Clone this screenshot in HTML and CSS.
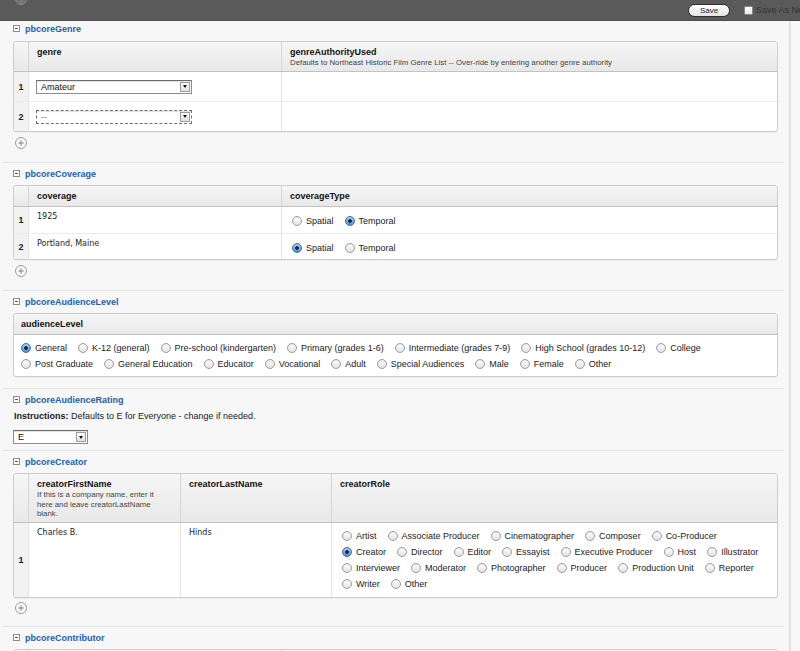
FILE: index.html
```html
<!DOCTYPE html>
<html lang="en">
<head>
<meta charset="utf-8">
<title>PBCore record</title>
<link rel="stylesheet" href="styles.css">
</head>
<body>
<header class="topbar">
  <span class="knob"></span>
  <span class="savebtn">Save</span>
  <span class="chk"></span>
  <span class="saveas">Save As New</span>
</header>
<div class="main">
  <div class="content">

    <section class="sec first">
      <h2 class="sh"><span class="minus"></span>pbcoreGenre</h2>
      <div class="tbl">
        <div class="tr th cols-genre">
          <div class="num"></div>
          <div class="cell"><div class="tt">genre</div></div>
          <div class="cell"><div class="tt">genreAuthorityUsed</div><div class="sub">Defaults to Northeast Historic Film Genre List -- Over-ride by entering another genre authority</div></div>
        </div>
        <div class="tr b cols-genre rows29">
          <div class="num">1</div>
          <div class="cell mid"><div class="select w156"><span class="val">Amateur</span><span class="arrow"></span></div></div>
          <div class="cell"></div>
        </div>
        <div class="tr b cols-genre rows29">
          <div class="num">2</div>
          <div class="cell mid"><div class="select w156 focus"><span class="val dim">--</span><span class="arrow"></span></div></div>
          <div class="cell"></div>
        </div>
      </div>
      <div class="add"><svg width="12" height="12" viewBox="0 0 12 12"><circle cx="6" cy="6" r="5.5" fill="#f9f9f9" stroke="#9b9b9b"/><path d="M6 3.3v5.4M3.3 6h5.4" stroke="#808080" stroke-width="1"/></svg></div>
    </section>

    <section class="sec">
      <h2 class="sh"><span class="minus"></span>pbcoreCoverage</h2>
      <div class="tbl">
        <div class="tr th cols-genre">
          <div class="num"></div>
          <div class="cell"><div class="tt">coverage</div></div>
          <div class="cell"><div class="tt">coverageType</div></div>
        </div>
        <div class="tr b cols-genre rows26">
          <div class="num">1</div>
          <div class="cell data">1925</div>
          <div class="cell rcell"><div class="radios small"><span class="opt"><span class="rd"></span>Spatial</span><span class="opt"><span class="rd on"></span>Temporal</span></div></div>
        </div>
        <div class="tr b cols-genre rows25">
          <div class="num">2</div>
          <div class="cell data">Portland, Maine</div>
          <div class="cell rcell"><div class="radios small"><span class="opt"><span class="rd on"></span>Spatial</span><span class="opt"><span class="rd"></span>Temporal</span></div></div>
        </div>
      </div>
      <div class="add"><svg width="12" height="12" viewBox="0 0 12 12"><circle cx="6" cy="6" r="5.5" fill="#f9f9f9" stroke="#9b9b9b"/><path d="M6 3.3v5.4M3.3 6h5.4" stroke="#808080" stroke-width="1"/></svg></div>
    </section>

    <section class="sec audience">
      <h2 class="sh"><span class="minus"></span>pbcoreAudienceLevel</h2>
      <div class="tbl">
        <div class="tr th single">
          <div class="cell nob"><div class="tt">audienceLevel</div></div>
        </div>
        <div class="tr b single">
          <div class="cell nob abody">
            <div class="radios">
              <span class="opt"><span class="rd on"></span>General</span>
              <span class="opt"><span class="rd"></span>K-12 (general)</span>
              <span class="opt"><span class="rd"></span>Pre-school (kindergarten)</span>
              <span class="opt"><span class="rd"></span>Primary (grades 1-6)</span>
              <span class="opt"><span class="rd"></span>Intermediate (grades 7-9)</span>
              <span class="opt"><span class="rd"></span>High School (grades 10-12)</span>
              <span class="opt"><span class="rd"></span>College</span>
              <span class="opt"><span class="rd"></span>Post Graduate</span>
              <span class="opt"><span class="rd"></span>General Education</span>
              <span class="opt"><span class="rd"></span>Educator</span>
              <span class="opt"><span class="rd"></span>Vocational</span>
              <span class="opt"><span class="rd"></span>Adult</span>
              <span class="opt"><span class="rd"></span>Special Audiences</span>
              <span class="opt"><span class="rd"></span>Male</span>
              <span class="opt"><span class="rd"></span>Female</span>
              <span class="opt"><span class="rd"></span>Other</span>
            </div>
          </div>
        </div>
      </div>
    </section>

    <section class="sec rating">
      <h2 class="sh"><span class="minus"></span>pbcoreAudienceRating</h2>
      <p class="instr"><b>Instructions:</b> Defaults to E for Everyone - change if needed.</p>
      <div class="select w75"><span class="val">E</span><span class="arrow"></span></div>
    </section>

    <section class="sec creator">
      <h2 class="sh"><span class="minus"></span>pbcoreCreator</h2>
      <div class="tbl">
        <div class="tr th cols-creator">
          <div class="num"></div>
          <div class="cell fn"><div class="tt">creatorFirstName</div><div class="sub">If this is a company name, enter it here and leave creatorLastName blank.</div></div>
          <div class="cell"><div class="tt">creatorLastName</div></div>
          <div class="cell"><div class="tt">creatorRole</div></div>
        </div>
        <div class="tr b cols-creator">
          <div class="num">1</div>
          <div class="cell data">Charles B.</div>
          <div class="cell data">Hinds</div>
          <div class="cell roles">
            <div class="radios">
              <span class="opt"><span class="rd"></span>Artist</span>
              <span class="opt"><span class="rd"></span>Associate Producer</span>
              <span class="opt"><span class="rd"></span>Cinematographer</span>
              <span class="opt"><span class="rd"></span>Composer</span>
              <span class="opt"><span class="rd"></span>Co-Producer</span>
              <span class="opt"><span class="rd on"></span>Creator</span>
              <span class="opt"><span class="rd"></span>Director</span>
              <span class="opt"><span class="rd"></span>Editor</span>
              <span class="opt"><span class="rd"></span>Essayist</span>
              <span class="opt"><span class="rd"></span>Executive Producer</span>
              <span class="opt"><span class="rd"></span>Host</span>
              <span class="opt"><span class="rd"></span>Illustrator</span>
              <span class="opt"><span class="rd"></span>Interviewer</span>
              <span class="opt"><span class="rd"></span>Moderator</span>
              <span class="opt"><span class="rd"></span>Photographer</span>
              <span class="opt"><span class="rd"></span>Producer</span>
              <span class="opt"><span class="rd"></span>Production Unit</span>
              <span class="opt"><span class="rd"></span>Reporter</span>
              <span class="opt"><span class="rd"></span>Writer</span>
              <span class="opt"><span class="rd"></span>Other</span>
            </div>
          </div>
        </div>
      </div>
      <div class="add"><svg width="12" height="12" viewBox="0 0 12 12"><circle cx="6" cy="6" r="5.5" fill="#f9f9f9" stroke="#9b9b9b"/><path d="M6 3.3v5.4M3.3 6h5.4" stroke="#808080" stroke-width="1"/></svg></div>
    </section>

    <section class="sec">
      <h2 class="sh"><span class="minus"></span>pbcoreContributor</h2>
      <div class="tbl">
        <div class="tr th cols-genre">
          <div class="num"></div>
          <div class="cell"><div class="tt">&nbsp;</div></div>
          <div class="cell"><div class="tt">&nbsp;</div></div>
        </div>
      </div>
    </section>

  </div>
  <div class="gutter"></div>
</div>
</body>
</html>
```

FILE: styles.css
```css
* { box-sizing: border-box; margin: 0; padding: 0; }
html, body { height: 100%; }
body {
  margin: 0;
  font-family: "Liberation Sans", Arial, sans-serif;
  font-size: 9px;
  color: #1e1e1e;
  background: #f7f7f7;
  overflow: hidden;
}

/* top bar */
.topbar {
  height: 21px;
  background: #5a5a5a;
  border-bottom: 1px solid #4c4c4c;
  display: flex;
  align-items: center;
  overflow: hidden;
  white-space: nowrap;
}
.topbar > * { flex: none; }
.knob {
  align-self: flex-start;
  width: 12px;
  height: 12px;
  margin: -7px 0 0 15px;
  border-radius: 50%;
  background: radial-gradient(circle at 50% 70%, #7a7a7a, #5e5e5e);
  border: 1px solid #8a8a8a;
}
.savebtn {
  margin-left: 661px;
  width: 42px;
  height: 13px;
  border-radius: 7px;
  border: 1px solid #2e2e2e;
  background: linear-gradient(#ffffff, #e4e4e4);
  font-size: 8px;
  line-height: 11px;
  text-align: center;
  color: #222;
}
.chk {
  width: 9px;
  height: 9px;
  margin-left: 14px;
  margin-right: 3px;
  background: linear-gradient(#ffffff, #e8e8e8);
  border: 1px solid #888;
  border-radius: 1px;
}
.saveas {
  font-size: 9px;
  color: #353535;
}

/* layout */
.main { display: flex; height: 630px; overflow: hidden; }
.content { width: 789px; flex: none; }
.gutter {
  flex: 1;
  border-left: 2px solid #e2e2e2;
  background: #f9f9f9;
}

.sec {
  margin: 0 5px 0 3px;
  padding: 4px 6px 13px 10px;
  border-bottom: 1px solid #e4e4e4;
}
.sec.first { padding-top: 1px; }
.sec.first .sh { margin-bottom: 6px; }
.sec.audience { padding-bottom: 11px; }
.sec.creator { padding-bottom: 12px; }
.sec.creator .add { margin-top: 4px; }
.sh {
  display: flex;
  align-items: center;
  height: 13px;
  margin-bottom: 5px;
  font-size: 9px;
  font-weight: bold;
  color: #2261aa;
}
.minus {
  width: 7px;
  height: 7px;
  margin-right: 5px;
  border: 1px solid #8d8d8d;
  background: linear-gradient(#555, #555) center / 3px 1px no-repeat, #fff;
}

/* tables */
.tbl {
  border: 1px solid #cdcdcd;
  border-radius: 3px;
  background: #fff;
  overflow: hidden;
  box-shadow: 0 1px 0 rgba(0, 0, 0, 0.04);
}
.tr { display: grid; }
.cols-genre { grid-template-columns: 14px 253px 1fr; }
.cols-creator { grid-template-columns: 14px 152px 151px 1fr; }
.single { grid-template-columns: 1fr; }
.rows29 { grid-auto-rows: 29px; }
.rows26 { grid-auto-rows: 26px; }
.rows25 { grid-auto-rows: 25px; }

.th {
  background: linear-gradient(#f6f6f6, #e8e8e8);
  border-bottom: 1px solid #c2c2c2;
}
.b { border-top: 1px solid #ececec; }
.th + .b { border-top: 0; }

.cell {
  border-left: 1px solid #e3e3e3;
  padding: 5px 8px;
}
.th .cell {
  border-left-color: #d7d7d7;
  padding: 5px 8px 4px;
}
.th .cell.fn { padding-right: 12px; }
.cell.nob { border-left: 0; padding-left: 7px; }
.cell.mid {
  display: flex;
  align-items: center;
  padding: 0 7px;
}
.num {
  display: flex;
  align-items: center;
  justify-content: center;
  font-weight: bold;
  font-size: 9px;
  background: #f2f2f2;
  color: #222;
}
.th .num { background: transparent; }
.tt {
  font-weight: bold;
  line-height: 11px;
  color: #111;
}
.sub {
  font-size: 7.8px;
  line-height: 9.3px;
  color: #444;
}
.data {
  font-family: "DejaVu Sans", Verdana, sans-serif;
  font-size: 8px;
  line-height: 10px;
  color: #222;
}

/* selects */
.select {
  display: flex;
  align-items: center;
  height: 14px;
  border: 1px solid #8c8c8c;
  border-top-color: #6c6c6c;
  background: #fff;
  box-shadow: inset 0 1px 1px rgba(0, 0, 0, 0.12);
}
.w156 { width: 156px; }
.w75 { width: 75px; margin-top: 7px; }
.select.focus { border: 1px dashed #6e6e6e; }
.val {
  flex: 1;
  padding-left: 4px;
  font-size: 9px;
  line-height: 12px;
  color: #111;
}
.val.dim { color: #777; }
.arrow {
  width: 10px;
  height: 10px;
  margin-right: 1px;
  border: 1px solid #9c9c9c;
  background: linear-gradient(#ffffff, #e0e0e0);
  display: flex;
  align-items: center;
  justify-content: center;
}
.arrow::after {
  content: "";
  border-left: 2.5px solid transparent;
  border-right: 2.5px solid transparent;
  border-top: 3px solid #111;
}

/* radios */
.radios {
  display: flex;
  flex-wrap: wrap;
  column-gap: 11px;
  line-height: 16px;
  color: #222;
}
.opt {
  display: inline-flex;
  align-items: center;
  height: 16px;
  white-space: nowrap;
}
.radios.small .opt { height: 11px; }
.rd {
  width: 10px;
  height: 10px;
  margin-right: 4px;
  border-radius: 50%;
  border: 1px solid #9d9d9d;
  background: linear-gradient(#ffffff, #e2e2e2);
  box-shadow: inset 0 1px 1px rgba(0, 0, 0, 0.08);
}
.rd.on {
  border-color: #46689a;
  background:
    radial-gradient(circle, #142844 0 1.5px, transparent 2.2px),
    linear-gradient(#b3d3f7, #4b8ede);
}
.rcell { padding: 8px 8px 0 10px; }
.abody { padding: 5px 8px 4px 11px; }
.roles { padding: 5px 6px 5px 10px; }

.add {
  height: 12px;
  margin: 5px 0 0 2px;
  display: flex;
}

/* audience rating */
.rating { padding-bottom: 6px; }
.instr {
  margin-top: -1px;
  margin-left: 1px;
  line-height: 13px;
  color: #222;
}
.instr b { color: #1a1a1a; }
```
